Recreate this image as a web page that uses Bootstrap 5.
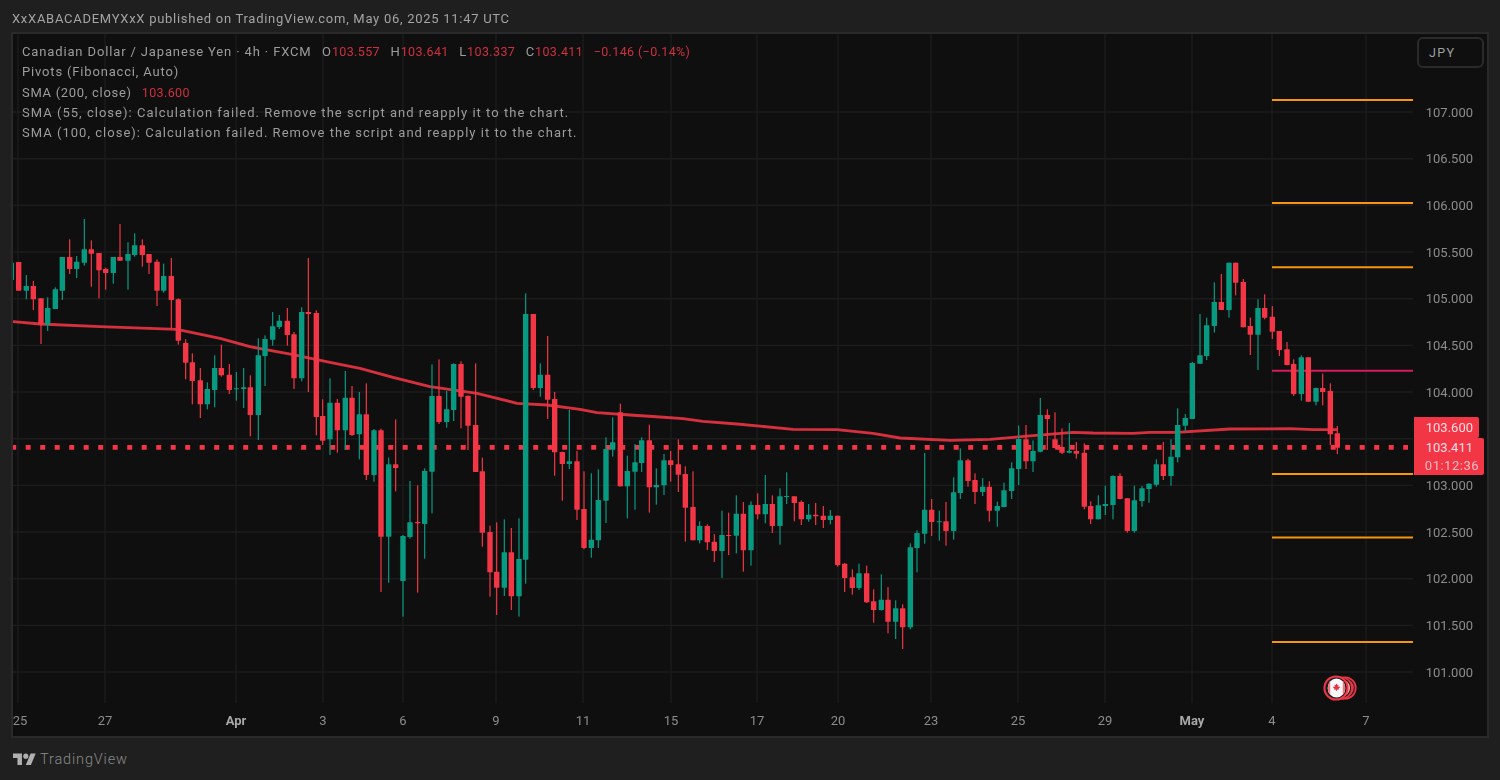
<!DOCTYPE html>
<html lang="en">
<head>
<meta charset="utf-8">
<title>CADJPY</title>
<link href="https://cdn.jsdelivr.net/npm/bootstrap@5.3.0/dist/css/bootstrap.min.css" rel="stylesheet">
<style>
html,body{height:780px;overflow:hidden}
body{background:#1f1f1f;color:#a6a6a6;font-family:Roboto,"Liberation Sans",sans-serif}
.page-shell{height:780px;padding:0 11px}
.pub-head{height:32px;font-size:13px;letter-spacing:.72px;color:#a4a4a4;padding-left:1px;padding-top:10px;line-height:18px;white-space:nowrap;filter:blur(.25px)}
.chart-frame{height:706px;border:2px solid #2a2a2a;background:#0f0f0f;overflow:hidden}
.chart-svg{display:block;width:1474px;height:702px;filter:blur(.3px)}
.legend-box{left:9px;top:8px;font-size:13px;line-height:20.25px;color:#9c9c9c;white-space:nowrap;filter:blur(.25px)}
.legend-box .val{color:#cf2f3e;font-size:12.5px;letter-spacing:.38px}
.legend-box .gap-l{margin-left:10.5px}
.ln-a{letter-spacing:.86px}
.ln-b{letter-spacing:.83px}
.ln-c{letter-spacing:.7px}
.ln-d{letter-spacing:1.02px}
.ln-c .val{margin-left:10px}
.unit-box{left:1404px;top:3px;width:67px;height:31px;border:2px solid #2a2a2a;border-radius:6px;font-size:12.5px;letter-spacing:1.3px;line-height:27px;padding-left:10px;color:#a0a0a0}
.foot-bar{height:42px;padding-left:2px;padding-top:2px}
.tv-mark{width:23px;height:18px;fill:#b0b0b0}
.tv-word{font-size:14.5px;font-weight:300;color:#8a8a8a;letter-spacing:.85px}
.ax{font-family:Roboto,"Liberation Sans",sans-serif;font-size:13px;fill:#8c8c8c}
.ax-b{font-weight:700;fill:#a8a8a8}
.tag-a,.tag-b{background:#f23645;color:#ffdde0;left:1401px;font-size:13px;text-align:right;filter:blur(.2px)}
.tag-a{top:383px;width:65px;height:21px;line-height:21px;padding-right:6px;border-radius:0 2px 2px 0}
.tag-b{top:404px;width:70px;height:37px;padding-right:0;border-radius:0 2px 2px 0;line-height:17.5px;padding-top:1px}
.tag-b span{display:block;padding-right:11px}
.tag-b span.cd{padding-right:5px;opacity:.8;letter-spacing:.5px}
</style>
</head>
<body>
<div class="page-shell d-flex flex-column">
  <div class="pub-head">XxXABACADEMYXxX published on TradingView.com, May 06, 2025 11:47 UTC</div>
  <div class="chart-frame position-relative">
    <svg class="chart-svg" id="chart" viewBox="13 34 1474 702" xmlns="http://www.w3.org/2000/svg">
      <g id="grid" stroke="#1c1c1c" stroke-width="1.4" fill="none"></g>
      <g id="pivots" fill="none" stroke-width="2"></g>
      <line x1="13" y1="447.3" x2="1408" y2="447.3" stroke="#f23645" stroke-width="4.8" stroke-dasharray="5 9.5" stroke-dashoffset="1.8"></line>
      <polyline id="ma" fill="none" stroke="#f23645" stroke-width="2.8" stroke-opacity=".88" stroke-linejoin="round"></polyline>
      <g id="candles"></g>
      <g id="flag">
        <circle cx="1345" cy="688" r="11.6" fill="#f23645"></circle>
        <circle cx="1345" cy="688" r="9.4" fill="none" stroke="#2a2020" stroke-width="1.2"></circle>
        <circle cx="1341" cy="688" r="11.6" fill="#f23645"></circle>
        <circle cx="1341" cy="688" r="9.6" fill="#f7b6bb" stroke="#2a2020" stroke-width="1.2"></circle>
        <circle cx="1336" cy="688" r="12.6" fill="#f23645"></circle>
        <circle cx="1336" cy="688" r="10.6" fill="#1f1f22"></circle>
        <clipPath id="fc"><ellipse cx="1336.5" cy="688" rx="8.8" ry="9.6"></ellipse></clipPath>
        <g clip-path="url(#fc)">
          <rect x="1327" y="678" width="20" height="20" fill="#f7f7fa"></rect>
          <rect x="1327" y="678" width="3.2" height="20" fill="#f4727d"></rect>
          <rect x="1342.8" y="678" width="3.2" height="20" fill="#f4727d"></rect>
          <path d="M1336.5 683.6l1 1.7 1-.4-.3 2 1.3-.4.5 1-1.5 1.3.3.9-1.9-.3v1.6h-.8v-1.6l-1.9.3.3-.9-1.5-1.3.5-1 1.3.4-.3-2 1 .4z" fill="#e5333f"></path>
        </g>
      </g>
      <g id="labels"></g>
    </svg>
    <div class="legend-box position-absolute">
      <div class="ln-a">Canadian Dollar / Japanese Yen · 4h · FXCM<span class="gap-l">O</span><span class="val">103.557</span><span class="gap-l">H</span><span class="val">103.641</span><span class="gap-l">L</span><span class="val">103.337</span><span class="gap-l">C</span><span class="val">103.411</span><span class="gap-l val">−0.146 (−0.14%)</span></div>
      <div class="ln-b">Pivots (Fibonacci, Auto)</div>
      <div class="ln-c">SMA (200, close)<span class="val">103.600</span></div>
      <div class="ln-d">SMA (55, close): Calculation failed. Remove the script and reapply it to the chart.</div>
      <div class="ln-d">SMA (100, close): Calculation failed. Remove the script and reapply it to the chart.</div>
    </div>
    <div class="unit-box position-absolute">JPY</div>
    <div class="tag-a position-absolute">103.600</div>
    <div class="tag-b position-absolute"><span>103.411</span><span class="cd">01:12:36</span></div>
  </div>
  <div class="foot-bar d-flex align-items-center gap-1">
    <svg class="tv-mark" viewBox="0 0 36 28" xmlns="http://www.w3.org/2000/svg"><path d="M14 22H7V11H0V4h14v18ZM28 22h-8l7.5-18h8L28 22Z"></path><circle cx="20" cy="8" r="4"></circle></svg>
    <span class="tv-word">TradingView</span>
  </div>
</div>
<script src="https://cdn.jsdelivr.net/npm/bootstrap@5.3.0/dist/js/bootstrap.bundle.min.js"></script>
<script>
const NS='http://www.w3.org/2000/svg';
function el(parent,tag,attrs,txt){const e=document.createElementNS(NS,tag);for(const k in attrs)e.setAttribute(k,attrs[k]);if(txt)e.textContent=txt;parent.appendChild(e);return e;}
const segs=[
[0,200,`g,34,188,188,240,240;r,56,186,186,272,272;g,79,225,258,272,298;r,100,243,258,298,330;r,123,295,295,374,432;g,143,292,324,375,393;g,166,262,268,327,327;g,187,171,171,272,300;r,209,118,171,207,222;g,230,168,185,207,234;g,253,57,148,188,197;r,274,121,148,161,260;r,297,159,159,211,295;r,317,203,207,219,269;g,340,171,171,219,251;r,360,72,171,182,182;g,384,127,162,182,269;g,404,100,136,165,170;r,427,118,136,165,200;r,447,162,162,188,222;r,471,178,185,272,318;g,491,191,228,272,278;r,514,174,228,300,385;r,535,295,298,422,434;r,557,418,429,488,538;r,577,460,487,543,613;r,601,504,541,613,654;g,622,547,567,613,628;g,644,466,504,570,622;r,664,434,504,526,530;r,688,492,524,570,582;g,709,516,565,567,602;g,731,504,562,567,624;r,751,526,562,645,709;g,775,415,466,645,720;g,795,406,417,468,558;g,818,336,379,419,437;g,838,345,362,381,387;r,862,324,362,405,437;r,882,396,403,535,567;g,905,322,336,535,544;r,925,174,336,342,576;r,949,331,339,651,706;r,968,598,648,722,735`],
[330,280,`g,0,295,368,478,525;r,22,357,368,451,518;g,46,273,353,451,510;r,66,318,353,465,468;g,88,336,403,463,538;r,109,310,403,585,600;g,132,447,451,585,605;r,153,446,451,770,936;g,176,533,553,770,908;r,197,418,553,564,634;g,219,765,768,903,1010;g,240,603,727,771,776;r,263,616,726,730,938;g,284,565,573,732,836;g,306,253,348,575,700;r,327,238,348,426,432;g,350,333,388,426,443;g,371,250,252,390,423;r,393,244,252,350,445;r,414,347,347,437,510;r,437,250,435,576,576;r,457,533,574,758,800;r,480,737,756,877,950;r,500,727,875,923,1005;g,523,718,817,923,948;r,544,744,817,949,990;g,567,715,837,949,1010;g,587,40,102,839,911;r,610,102,102,324,330;g,631,250,284,324,350;r,653,168,284,359,417;r,674,336,357,517,587;r,697,515,516,552,662;g,718,390,544,552,567;r,741,513,544,689,720;r,762,574,687,804,808;g,784,580,779,804,833;g,805,568,660,781,804;g,828,472,507,662,729;g,848,412,487,509,530;r,871,371,397,619,620;g,892,527,573,619,715;g,915,492,547,575,689;g,935,472,481,549,576;r,958,434,481,622,698;g,979,565,615,622,674`],
[660,400,`g,12,162,181,256,285;r,32,153,181,195,245;r,55,118,193,224,276;r,76,199,222,323,425;r,99,214,321,421,421;g,119,364,378,421,430;r,142,373,378,427,450;r,163,402,425,453,486;g,186,332,405,453,534;r,206,338,405,408,465;g,229,286,341,407,460;r,250,306,341,451,515;g,273,304,315,451,497;r,293,280,315,343,358;g,316,225,312,343,370;r,337,286,312,378,399;g,360,265,289,378,434;g,380,217,288,291,312;r,403,289,289,309,364;r,424,301,306,358,375;g,446,312,344,358,365;r,467,309,344,349,375;r,490,318,347,360,384;g,511,330,347,360,373;r,533,347,347,495,500;r,554,489,491,534,576;r,577,508,532,564,584;g,597,491,520,564,570;r,620,497,520,607,609;r,641,568,604,630,668;g,664,523,599,630,632;r,684,561,599,665,700;g,707,601,625,665,717;r,728,613,625,682,747;g,751,430,442,682,688;g,771,391,399,444,517;g,794,159,329,401,431;r,815,297,329,366,408;g,838,332,364,366,422;r,858,306,364,393,437;g,881,232,277,393,419;g,901,145,181,279,297;r,924,176,181,243,260;r,945,220,240,276,312;g,968,234,260,276,288`],
[990,250,`r,-2,694,710,782,815;g,22,755,768,782,830;g,42,698,721,771,772;g,65,637,655,723,747;g,86,527,567,657,705;r,108,525,568,634,657;g,129,571,603,634,666;g,151,444,495,605,607;r,172,478,495,507,600;r,195,487,568,594,595;r,216,535,591,608,612;g,238,519,603,608,610;r,259,576,603,611,626;r,283,580,608,770,778;r,302,754,768,808,822;g,325,736,766,808,808;g,346,707,762,768,795;g,369,676,678,765,808;r,390,670,678,747,748;r,412,744,745,843,848;g,433,707,751,843,848;g,456,708,715,753,770;g,477,700,701,717,758;g,499,628,643,704,710;r,520,576,643,678,690;g,543,568,620,678,707;g,563,475,525,622,637;g,586,492,504,527,545;g,607,336,339,507,507;g,630,192,316,341,341;g,650,203,226,318,330;g,673,97,156,228,248;r,694,72,156,180,180;g,717,38,38,180,203;r,737,38,38,98,136;r,760,87,96,232,232;r,781,203,228,254,315;g,804,148,174,254,360;r,824,133,174,203,208;r,847,168,200,245,267;r,868,243,243,300,318;r,891,276,298,345,346;r,911,328,342,432,438;g,934,316,322,432,452;r,955,322,322,455,455;g,978,413,414,455,466;r,998,371,414,426,466;r,1021,400,423,553,585;r,1042,528,550,593,612`]
];
const C={r:'#f23645',g:'#089981'};
const cg=document.getElementById('candles');
segs.forEach(([ox,oy,s])=>{s.split(';').forEach(row=>{const p=row.split(',');const c=C[p[0]],n=p.slice(1).map(Number);
  const x=ox+n[0]/3,wt=oy+n[1]/3,bt=oy+n[2]/3,bb=oy+n[3]/3,wb=oy+n[4]/3;
  el(cg,'rect',{x:(x-.6).toFixed(2),y:wt.toFixed(2),width:1.2,height:(wb-wt).toFixed(2),fill:c});
  el(cg,'rect',{x:(x-2.7).toFixed(2),y:bt.toFixed(2),width:5.4,height:Math.max(1,bb-bt).toFixed(2),fill:c,rx:.4});
});});
document.getElementById('ma').setAttribute('points','13,321.7 40,324 100,326.7 177,329.3 220,338.3 250,346.7 293,354.7 330,362.3 360,368.3 393,377.3 430,386.7 477,393.3 517,403.3 547,405 580,409.3 597,412.7 630,415 660,417 683,418.7 703,421.3 737,424 793,429.3 837,429.7 873,433.3 900,438 950,440.3 990,439.3 1033,435.7 1073,432.3 1093,433 1133,433.3 1150,432.3 1177,432.3 1230,429 1290,428.7 1313,429.7 1337,429.7');
const gr=document.getElementById('grid');
const xs=[[18,'25',0,20],[105,'27'],[236,'Apr',1],[323,'3'],[403,'6'],[496,'9'],[583,'11'],[671,'15'],[757,'17'],[838,'20'],[931,'23'],[1018,'25'],[1105,'29'],[1192,'May',1],[1272,'4'],[1366,'7']];
xs.forEach(([x])=>el(gr,'line',{x1:x,x2:x,y1:34,y2:703}));
const lb=document.getElementById('labels');
xs.forEach(([x,t,b,tx])=>el(lb,'text',{x:tx||x,y:725,'text-anchor':'middle',class:'ax'+(b?' ax-b':'')},t));
['107.000','106.500','106.000','105.500','105.000','104.500','104.000','103.500','103.000','102.500','102.000','101.500','101.000'].forEach((t,i)=>{
  const y=112+i*46.67;
  el(gr,'line',{x1:13,x2:1413,y1:y.toFixed(1),y2:y.toFixed(1)});
  if(t!=='103.500')el(lb,'text',{x:1473,y:(y+4.7).toFixed(1),'text-anchor':'end',class:'ax'},t);
});
const pv=document.getElementById('pivots');
[[100,'#f7960e'],[203,'#f7960e'],[267.3,'#f7960e'],[370.7,'#d81b60'],[474,'#fb9800'],[537.6,'#f7960e'],[642,'#f7960e']].forEach(([y,c])=>el(pv,'line',{x1:1272,x2:1413,y1:y,y2:y,stroke:c}));
</script>
</body>
</html>
